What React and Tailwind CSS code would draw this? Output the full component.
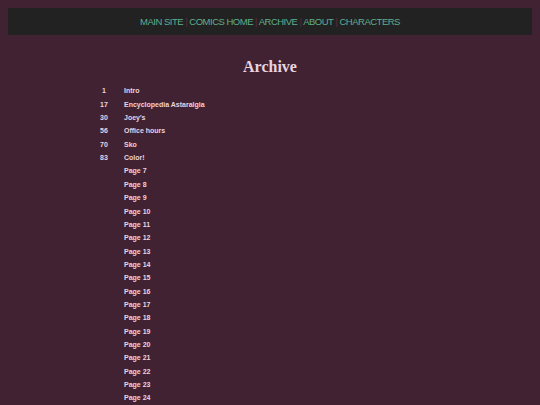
const chapters = [
  { num: "1", title: "Intro" },
  { num: "17", title: "Encyclopedia Astaralgia" },
  { num: "30", title: "Joey's" },
  { num: "56", title: "Office hours" },
  { num: "70", title: "Sko" },
  { num: "83", title: "Color!" },
];

const pages = [];
for (let i = 7; i <= 24; i++) pages.push({ num: "", title: `Page ${i}` });

const links = ["MAIN SITE", "COMICS HOME", "ARCHIVE", "ABOUT", "CHARACTERS"];

function App() {
  const rows = [...chapters, ...pages];
  return (
    <div className="min-h-screen bg-[#412233] pt-2 font-['Liberation_Sans',Arial,sans-serif]">
      <div className="mx-2 bg-[#222222] h-[27px] leading-[28px] text-center text-[9.5px] tracking-[-0.5px] text-[#5fae8d]">
        {links.map((l, i) => (
          <span key={l}>
            {i > 0 && <span className="text-[#5a2c40]">{" | "}</span>}
            {l}
          </span>
        ))}
      </div>

      <h1 className="mt-[20px] text-center text-[16px] font-bold text-[#ead3df] font-['Liberation_Serif',Georgia,serif]">
        Archive
      </h1>

      <div className="mt-[6px] ml-[88px] flex flex-col">
        {rows.map((r) => (
          <div key={r.title} className="flex h-[13.35px] items-center text-[7px] font-bold text-[#ead3df]">
            <span className="w-[32px] text-center">{r.num}</span>
            <span className="ml-[4px]">{r.title}</span>
          </div>
        ))}
      </div>
    </div>
  );
}

export default App;
